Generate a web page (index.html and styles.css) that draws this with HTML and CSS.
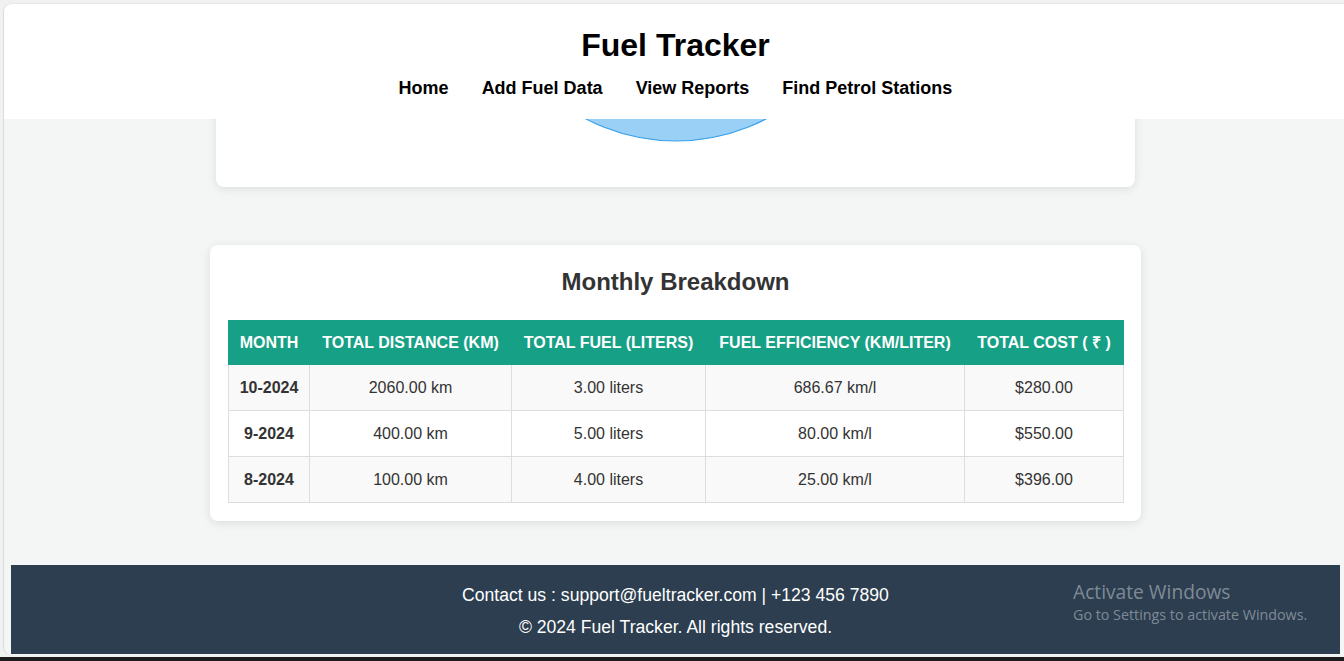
FILE: index.html
```html
<!DOCTYPE html>
<html lang="en">
<head>
<meta charset="utf-8">
<title>Fuel Tracker</title>
<link rel="stylesheet" href="styles.css">
</head>
<body>
<div class="window">
  <header class="site-header">
    <h1 class="site-title">Fuel Tracker</h1>
    <nav class="site-nav">
      <a href="#">Home</a>
      <a href="#">Add Fuel Data</a>
      <a href="#">View Reports</a>
      <a href="#">Find Petrol Stations</a>
    </nav>
  </header>

  <main class="page">
    <section class="card chart-card">
      <svg class="pie" width="919" height="183" viewBox="0 0 919 183">
        <circle cx="460" cy="-58" r="195" fill="#9ad0f5" stroke="#36a2eb" stroke-width="1.2"/>
      </svg>
    </section>

    <section class="card table-card">
      <h2 class="card-title">Monthly Breakdown</h2>
      <table class="breakdown">
        <colgroup>
          <col class="c-month">
          <col class="c-dist">
          <col class="c-fuel">
          <col class="c-eff">
          <col class="c-cost">
        </colgroup>
        <thead>
          <tr>
            <th>Month</th>
            <th>Total Distance (km)</th>
            <th>Total Fuel (liters)</th>
            <th>Fuel Efficiency (km/liter)</th>
            <th>Total Cost ( ₹ )</th>
          </tr>
        </thead>
        <tbody>
          <tr>
            <td class="month">10-2024</td>
            <td>2060.00 km</td>
            <td>3.00 liters</td>
            <td>686.67 km/l</td>
            <td>$280.00</td>
          </tr>
          <tr>
            <td class="month">9-2024</td>
            <td>400.00 km</td>
            <td>5.00 liters</td>
            <td>80.00 km/l</td>
            <td>$550.00</td>
          </tr>
          <tr>
            <td class="month">8-2024</td>
            <td>100.00 km</td>
            <td>4.00 liters</td>
            <td>25.00 km/l</td>
            <td>$396.00</td>
          </tr>
        </tbody>
      </table>
    </section>

    <footer class="site-footer">
      <p>Contact us : support@fueltracker.com | +123 456 7890</p>
      <p>© 2024 Fuel Tracker. All rights reserved.</p>
    </footer>
  </main>

  <div class="activate">
    <div class="activate-title">Activate Windows</div>
    <div class="activate-sub">Go to Settings to activate Windows.</div>
  </div>
</div>
<div class="taskbar"></div>
</body>
</html>
```

FILE: styles.css
```css
* { box-sizing: border-box; }

html, body {
  margin: 0;
  padding: 0;
}

body {
  background: #f1f1f1;
  height: 661px;
  overflow: hidden;
  font-family: "Liberation Sans", Arial, sans-serif;
  color: #333;
}

.window {
  position: relative;
  margin: 4px 0 0 4px;
  height: 651px;
  background: #f4f5f5;
  border-radius: 8px 0 0 8px;
  box-shadow: -1px 0 0 #dcdcdc, 0 -1px 0 #e6e6e6;
  overflow: hidden;
}

.site-header {
  position: absolute;
  top: 0;
  left: 0;
  right: 0;
  height: 115px;
  background: #fff;
  padding: 23px 4px 0 7px;
  text-align: center;
  z-index: 5;
}

.site-title {
  margin: 0;
  font-size: 32px;
  line-height: 37px;
  font-weight: bold;
  color: #000;
}

.site-nav {
  margin-top: 14px;
  display: flex;
  justify-content: center;
  gap: 33px;
  line-height: 21px;
}

.site-nav a {
  color: #000;
  text-decoration: none;
  font-weight: bold;
  font-size: 18px;
}

.page {
  padding: 0 4px 0 7px;
  display: flex;
  flex-direction: column;
  align-items: center;
}

.card {
  background: #fff;
  border-radius: 8px;
  box-shadow: 0 2px 10px rgba(0, 0, 0, 0.1);
}

.chart-card {
  width: 919px;
  height: 183px;
  border-radius: 0 0 8px 8px;
}

.pie {
  display: block;
}

.table-card {
  width: 931px;
  margin-top: 58px;
  padding: 18px;
}

.card-title {
  margin: 5px 0 24px;
  text-align: center;
  font-size: 24px;
  line-height: 28px;
  font-weight: bold;
  color: #333;
}

.breakdown {
  width: 895px;
  table-layout: fixed;
  border-collapse: collapse;
  font-size: 16px;
  text-align: center;
}

.c-month { width: 81px; }
.c-dist { width: 202px; }
.c-fuel { width: 194px; }
.c-eff { width: 259px; }
.c-cost { width: 159px; }

.breakdown th {
  background: #16a085;
  color: #fff;
  font-weight: bold;
  text-transform: uppercase;
  padding: 12px 0;
  line-height: 19px;
  border: 1px solid #16a085;
  white-space: nowrap;
}

.breakdown td {
  padding: 12px 0;
  line-height: 21px;
  border: 1px solid #ddd;
  color: #333;
}

.breakdown tbody tr:nth-child(odd) td {
  background: #f9f9f9;
}

.breakdown td.month {
  font-weight: bold;
}

.site-footer {
  align-self: stretch;
  margin-top: 44px;
  background: #2c3e50;
  color: #fff;
  text-align: center;
  padding: 14px 0 11px;
  font-size: 17.6px;
}

.site-footer p {
  margin: 0;
  line-height: 32px;
}

.activate {
  position: absolute;
  left: 1069px;
  top: 576px;
  color: rgba(200, 205, 212, 0.55);
  font-family: "Open Sans", "Noto Sans", sans-serif;
  z-index: 6;
}

.activate-title {
  font-size: 19.2px;
  line-height: 24px;
}

.activate-sub {
  font-size: 14.3px;
  line-height: 21px;
}

.taskbar {
  margin-top: 2px;
  height: 4px;
  background: #1c1c1c;
}
```
